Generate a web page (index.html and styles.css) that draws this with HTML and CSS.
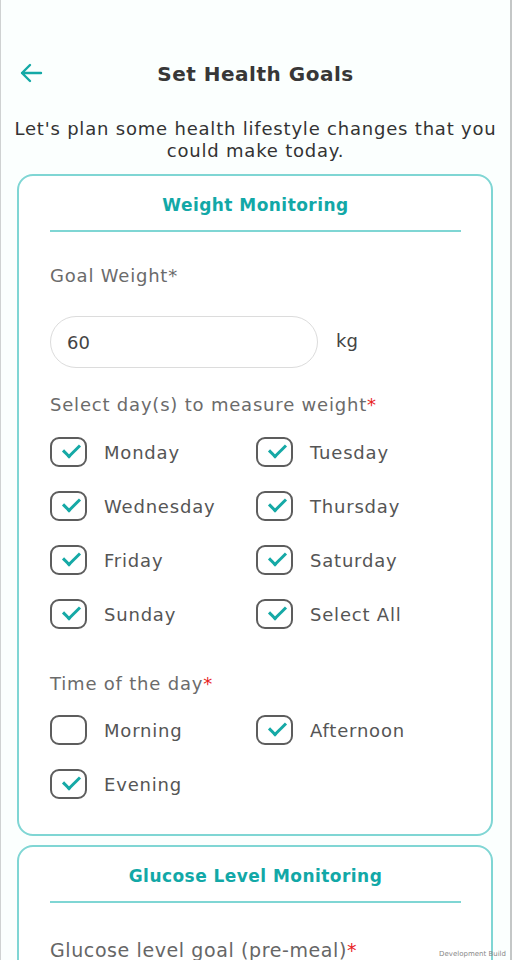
FILE: index.html
```html
<!DOCTYPE html>
<html>
<head>
<meta charset="utf-8">
<link rel="stylesheet" href="styles.css">
</head>
<body>
<div class="screen">
  <header class="topbar">
    <svg class="back" width="24" height="20" viewBox="0 0 24 20"><path d="M22 10H3M11 2L3 10l8 8" fill="none" stroke="#14a9a6" stroke-width="2.4" stroke-linecap="round" stroke-linejoin="round"/></svg>
    <h1 class="title">Set Health Goals</h1>
  </header>
  <p class="intro">Let's plan some health lifestyle changes that you could make today.</p>

  <section class="card">
    <h2 class="card-title">Weight Monitoring</h2>
    <div class="divider"></div>
    <div class="label goal-label">Goal Weight*</div>
    <div class="input-row">
      <div class="input">60</div>
      <span class="unit">kg</span>
    </div>
    <div class="label days-label">Select day(s) to measure weight<span class="req">*</span></div>
    <div class="grid days">
      <div class="opt"><span class="box on"></span>Monday</div>
      <div class="opt"><span class="box on"></span>Tuesday</div>
      <div class="opt"><span class="box on"></span>Wednesday</div>
      <div class="opt"><span class="box on"></span>Thursday</div>
      <div class="opt"><span class="box on"></span>Friday</div>
      <div class="opt"><span class="box on"></span>Saturday</div>
      <div class="opt"><span class="box on"></span>Sunday</div>
      <div class="opt"><span class="box on"></span>Select All</div>
    </div>
    <div class="label time-label">Time of the day<span class="req">*</span></div>
    <div class="grid times">
      <div class="opt"><span class="box"></span>Morning</div>
      <div class="opt"><span class="box on"></span>Afternoon</div>
      <div class="opt"><span class="box on"></span>Evening</div>
    </div>
  </section>

  <section class="card card2">
    <h2 class="card-title">Glucose Level Monitoring</h2>
    <div class="divider"></div>
    <div class="label glucose-label">Glucose level goal (pre-meal)<span class="req">*</span></div>
  </section>
  <span class="devtag">Development Build</span>
</div>
</body>
</html>
```

FILE: styles.css
```css
html, body {
  margin: 0;
  padding: 0;
  background: #fbfffe;
}
body {
  font-family: "DejaVu Sans", "Open Sans", sans-serif;
  color: #333;
  height: 960px;
  overflow: hidden;
}
.screen {
  position: relative;
  height: 960px;
  overflow: hidden;
  border-left: 1px solid #cfd2d2;
  border-right: 2px solid #c4c7c7;
  box-sizing: border-box;
}
.topbar {
  display: flex;
  align-items: center;
  justify-content: center;
  position: relative;
  height: 52px;
  margin-top: 48px;
}
.back {
  position: absolute;
  left: 18px;
  top: 15px;
}
.title {
  margin: 0;
  font-size: 20px;
  font-weight: 700;
  color: #373737;
  line-height: 28px;
  letter-spacing: 0.5px;
}
.intro {
  margin: 18px 4px 0;
  text-align: center;
  font-size: 18px;
  line-height: 22px;
  color: #333;
  letter-spacing: 0.8px;
}
.card {
  margin: 12px 17px 0 16px;
  border: 2px solid #7fd6d4;
  border-radius: 16px;
  background: #fff;
  padding: 17px 30px 35px 31px;
  display: flex;
  flex-direction: column;
}
.card2 {
  margin-top: 9px;
}
.card-title {
  margin: 0;
  text-align: center;
  font-size: 17px;
  font-weight: 700;
  color: #12a8a7;
  line-height: 24px;
  letter-spacing: 0.45px;
}
.divider {
  height: 2px;
  background: #7fd6d4;
  margin-top: 13px;
}
.label {
  font-size: 18px;
  line-height: 24px;
  color: #6b6b6b;
  letter-spacing: 0.8px;
}
.req { color: #e8241f; }
.goal-label { margin-top: 32px; }
.input-row {
  display: flex;
  align-items: center;
  margin-top: 28px;
}
.input {
  width: 268px;
  height: 52px;
  box-sizing: border-box;
  border: 1.5px solid #dcdcdc;
  border-radius: 26px;
  padding-left: 16px;
  display: flex;
  align-items: center;
  font-size: 18px;
  color: #444;
}
.unit {
  margin-left: 18px;
  margin-top: -4px;
  font-size: 18px;
  color: #444;
}
.days-label { margin-top: 25px; }
.grid {
  display: grid;
  grid-template-columns: 206px 1fr;
  row-gap: 24px;
}
.days { margin-top: 20px; }
.time-label { margin-top: 43px; }
.times { margin-top: 19px; }
.opt {
  display: flex;
  align-items: center;
  height: 30px;
  font-size: 18px;
  color: #555;
  letter-spacing: 0.8px;
}
.box {
  width: 37px;
  height: 30px;
  box-sizing: border-box;
  border: 2px solid #5d5d5d;
  border-radius: 9px;
  margin-right: 17px;
  position: relative;
  flex: none;
}
.box.on::after {
  content: "";
  position: absolute;
  left: 11px;
  top: 5px;
  width: 14px;
  height: 7px;
  border-left: 3px solid #15a9a6;
  border-bottom: 3px solid #15a9a6;
  transform: rotate(-45deg);
  transform-origin: center;
}
.glucose-label {
  margin-top: 35px;
  font-size: 19px;
  color: #666;
  letter-spacing: 0.6px;
}
.devtag {
  position: absolute;
  right: 4px;
  bottom: 2px;
  font-size: 7px;
  color: #888;
}
```
